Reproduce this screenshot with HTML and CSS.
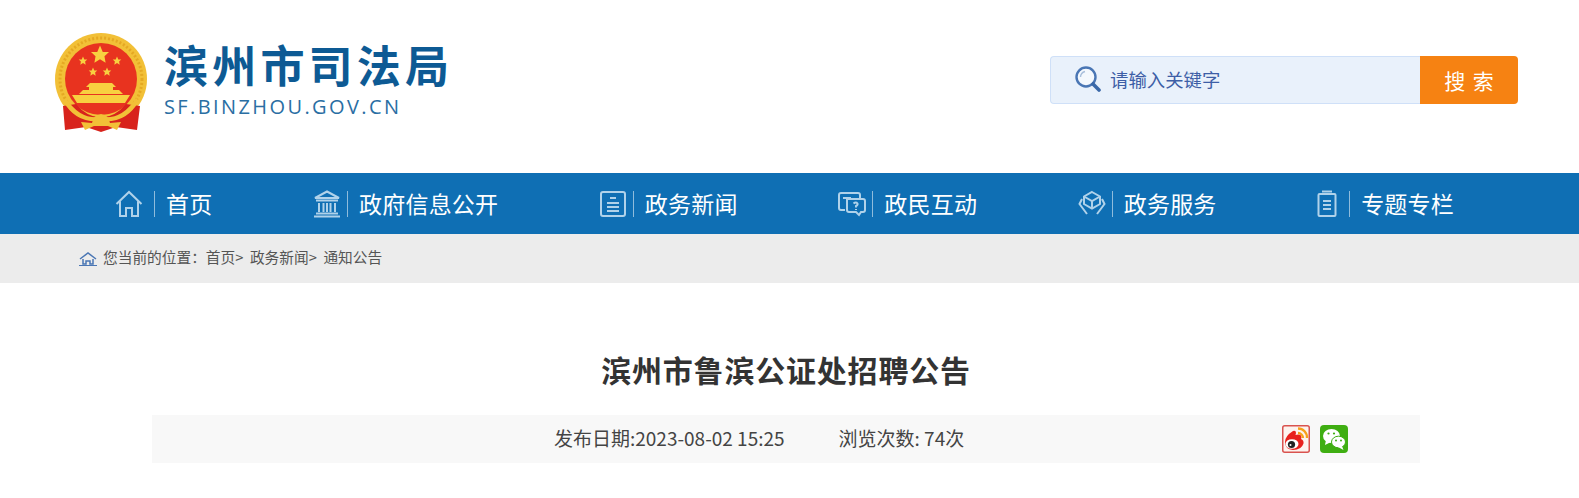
FILE: index.html
```html
<!DOCTYPE html>
<html lang="zh-CN">
<head>
    <meta charset="UTF-8">
    <title>滨州市鲁滨公证处招聘公告</title>
    <link rel="stylesheet" href="styles.css">
</head>
<body>
    <header class="top">
        <div class="logo">
            <svg class="emblem" viewBox="0 0 96 102">
                <defs>
                    <polygon id="star" points="0,-10 2.9,-3.1 9.5,-3.1 4.7,1.2 5.9,8.1 0,4.4 -5.9,8.1 -4.7,1.2 -9.5,-3.1 -2.9,-3.1"/>
                </defs>
                <circle cx="47" cy="47" r="46" fill="#f2c037"/>
                <circle cx="47" cy="47" r="41" fill="none" stroke="#e5a823" stroke-width="3" stroke-dasharray="2 2"/>
                <circle cx="47" cy="47" r="36" fill="#e8331f"/>
                <g fill="#f8d040">
                    <use href="#star" transform="translate(46 23) scale(.95)"/>
                    <use href="#star" transform="translate(29 29) scale(.45)"/>
                    <use href="#star" transform="translate(63 29) scale(.45)"/>
                    <use href="#star" transform="translate(39 40) scale(.45)"/>
                    <use href="#star" transform="translate(53 40) scale(.45)"/>
                    <path d="M36 51 H58 L62 55 H32 Z"/>
                    <path d="M35 55 H59 V58 H35 Z"/>
                    <path d="M29 58 H65 L69 62 H25 Z"/>
                    <path d="M18 63 H76 L71 71 H23 Z"/>
                </g>
                <path d="M9 74 L22 72 Q34 86 47 85 Q60 86 72 72 L86 74 L83 98 L62 95 L47 100 L32 95 L11 98 Z" fill="#d8231c"/>
                <path d="M12 66 Q26 88 47 85 Q68 88 82 66 L85 69 Q72 92 47 89 Q22 92 9 69 Z" fill="#f2c037"/>
                <path d="M27 90 L38 91 Q39 83 47 82 Q55 83 56 91 L67 90 L63 98 L54 94 H40 L31 98 Z" fill="#f2c037"/>
            </svg>
            <div class="logo-text">
                <div class="logo-name">滨州市司法局</div>
                <div class="logo-url">SF.BINZHOU.GOV.CN</div>
            </div>
        </div>
        <form class="search">
            <div class="search-box">
                <svg class="search-icon" viewBox="0 0 26 26">
                    <circle cx="11" cy="11" r="9.5" fill="#fff" fill-opacity=".5" stroke="#4a76b4" stroke-width="2.4"/>
                    <path d="M5.5 11 A6 6 0 0 1 10 5.5" fill="none" stroke="#a9bfdc" stroke-width="1.4"/>
                    <path d="M18 18 L24 24" stroke="#3a68a8" stroke-width="3.6" stroke-linecap="round"/>
                </svg>
                <span class="placeholder">请输入关键字</span>
            </div>
            <button type="button" class="search-btn">搜 索</button>
        </form>
    </header>

    <nav class="nav">
        <a class="nav-item">
            <svg class="nav-icon icon-home" viewBox="0 0 28 28">
                <path d="M1.5 14 L14 2 L26.500 14 M5 11.500 V26 H11 V18 H17 V26 H23 V11.500"/>
            </svg>
            <span class="nav-text">首页</span>
        </a>
        <a class="nav-item">
            <svg class="nav-icon" viewBox="0 0 28 28">
                <path d="M14 1.500 L26 8 H2 Z M3 10.500 H25 M6 13 V22 M10.500 13 V22 M14 13 V22 M17.500 13 V22 M22 13 V22 M3 23.500 H25 M1 26.500 H27"/>
            </svg>
            <span class="nav-text">政府信息公开</span>
        </a>
        <a class="nav-item">
            <svg class="nav-icon" viewBox="0 0 28 28">
                <rect x="2" y="2" width="24" height="24" rx="2"/>
                <path d="M11 8 H17 M8 13 H20 M8 17 H20 M8 21 H20"/>
            </svg>
            <span class="nav-text">政务新闻</span>
        </a>
        <a class="nav-item">
            <svg class="nav-icon" viewBox="0 0 28 28">
                <path d="M7 20 H3 Q1 20 1 18 V5 Q1 3 3 3 H20 Q22 3 22 5 V8 M5 8 H13"/>
                <path d="M9 9 H25 Q27 9 27 11 V20 Q27 22 25 22 H23 L21 25 L18 22 H11 Q9 22 9 20 Z"/>
                <path d="M15.500 13.500 Q18 11.500 19.500 13.500 Q20 15 18 16 V17.500 M18 19 V20"/>
            </svg>
            <span class="nav-text">政民互动</span>
        </a>
        <a class="nav-item">
            <svg class="nav-icon" viewBox="0 0 28 28">
                <path d="M14 2 L22 6.500 V14 L14 18.500 L6 14 V6.500 Z M6 6.500 L14 11 L22 6.500 M14 11 V18.500"/>
                <path d="M4 9 L1.500 14 L9 24 M24 9 L26.500 14 L19 24"/>
            </svg>
            <span class="nav-text">政务服务</span>
        </a>
        <a class="nav-item">
            <svg class="nav-icon icon-zt" viewBox="0 0 20 28">
                <rect x="1.500" y="4" width="17" height="22" rx="1"/>
                <path d="M5 1.500 H15 M6 11 H14 M6 15 H14 M6 19 H14"/>
            </svg>
            <span class="nav-text">专题专栏</span>
        </a>
    </nav>

    <div class="crumbs">
        <svg class="crumbs-icon" viewBox="0 0 18 14">
            <path d="M1 7 L9 1 L17 7" fill="none" stroke="#4a76b4" stroke-width="1.500"/>
            <path d="M4 7 V12 H7 V9 H11 V12 H14 V7" fill="none" stroke="#4a76b4" stroke-width="1.500"/>
            <path d="M0 13.500 H18" stroke="#4a76b4"/>
        </svg>
        <span>您当前的位置：首页&gt; &nbsp;政务新闻&gt; &nbsp;通知公告</span>
    </div>

    <main class="article">
        <h1 class="article-title">滨州市鲁滨公证处招聘公告</h1>
        <div class="meta">
            <span class="meta-date">发布日期:2023-08-02 15:25</span>
            <span class="meta-views">浏览次数: 74次</span>
            <div class="share">
                <svg class="share-icon" viewBox="0 0 28 28">
                    <rect x=".75" y=".75" width="26.500" height="26.500" rx="2" fill="#fdf3ee" stroke="#d9534f" stroke-width="1.500"/>
                    <path d="M3 17 Q3 11 11 6 Q14 5 14 8 L13.500 10 Q19 8.500 19.500 12 Q19.500 13 19 14 Q22 15 21.500 18.500 Q19.500 25 11 25 Q3 24.500 3 17 Z" fill="#e8211d"/>
                    <ellipse cx="10" cy="19" rx="6.500" ry="4.800" fill="#fff"/>
                    <circle cx="9.500" cy="19.500" r="3.600" fill="#222"/>
                    <circle cx="8.500" cy="20" r="1" fill="#fff"/>
                    <path d="M16 3.500 A9 9 0 0 1 25 13 M16 8 A5 5 0 0 1 21 13" fill="none" stroke="#f7a11a" stroke-width="2.300"/>
                </svg>
                <svg class="share-icon" viewBox="0 0 28 28">
                    <rect width="28" height="28" rx="4" fill="#3fae12"/>
                    <ellipse cx="11.500" cy="11" rx="8.500" ry="7" fill="#fff"/>
                    <path d="M6 15 L5 20 L11 17 Z" fill="#fff"/>
                    <ellipse cx="18.500" cy="17" rx="7" ry="5.800" fill="#fff" stroke="#3fae12"/>
                    <path d="M22 21 L23.500 25 L18 22 Z" fill="#fff"/>
                    <circle cx="8.500" cy="8.500" r="1.100" fill="#3fae12"/>
                    <circle cx="14" cy="8.500" r="1.100" fill="#3fae12"/>
                    <circle cx="16" cy="15.500" r="1" fill="#3fae12"/>
                    <circle cx="21" cy="15.500" r="1" fill="#3fae12"/>
                </svg>
            </div>
        </div>
    </main>
</body>
</html>
```

FILE: styles.css
```css
* {
    box-sizing: border-box;
    margin: 0;
    padding: 0;
}

body {
    font-family: "Noto Sans CJK SC", "Noto Sans", sans-serif;
    color: #333;
    background: #fff;
}

.top {
    display: flex;
    justify-content: space-between;
    height: 173px;
    padding: 32px 61px 0 54px;
}

.logo {
    display: flex;
    align-items: flex-start;
}

.emblem {
    width: 96px;
    height: 102px;
}

.logo-text {
    margin-left: 14px;
    color: #0d5a94;
}

.logo-name {
    margin-top: 5px;
    font-size: 44px;
    font-weight: 700;
    line-height: 54px;
    letter-spacing: 4.2px;
}

.logo-url {
    margin-top: 4px;
    font-family: "Open Sans", sans-serif;
    font-size: 20px;
    line-height: 24px;
    letter-spacing: 2.4px;
    color: #2a6ea3;
}

.search {
    display: flex;
    width: 468px;
    height: 48px;
    margin-top: 24px;
}

.search-box {
    display: flex;
    flex: 1;
    align-items: center;
    padding: 0 0 2px 24px;
    background: #e9f1fb;
    border: 1px solid #cfe0f8;
    border-right: 0;
    border-radius: 4px 0 0 4px;
}

.search-icon {
    width: 26px;
    height: 26px;
}

.placeholder {
    margin-left: 9px;
    font-size: 18.4px;
    color: #3d5ea6;
}

.search-btn {
    width: 98px;
    font-family: inherit;
    font-size: 21px;
    color: #fff;
    word-spacing: 3px;
    background: #f68212;
    border: 0;
    border-radius: 0 4px 4px 0;
}

.nav {
    display: flex;
    justify-content: space-between;
    height: 61px;
    padding: 0 125px 0 115px;
    background: #0f6fb4;
}

.nav-item {
    display: flex;
    align-items: center;
    color: #fff;
}

.nav-icon {
    width: 28px;
    height: 28px;
    margin-right: 6px;
    fill: none;
    stroke: #b0d2ea;
    stroke-width: 2;
}

.icon-home {
    margin-right: 11px;
}

.icon-zt {
    width: 20px;
    margin-right: 12px;
}

.nav-text {
    padding: 0 0 2px 11px;
    font-size: 23px;
    line-height: 24px;
    letter-spacing: .2px;
    border-left: 1px solid #8fbcdc;
}

.crumbs {
    display: flex;
    align-items: center;
    height: 49px;
    padding: 0 0 4px 79px;
    font-size: 14.7px;
    color: #555;
    background: #ececec;
}

.crumbs-icon {
    width: 18px;
    height: 14px;
    margin: 4px 6px 0 0;
}

.article {
    width: 1268px;
    margin-left: 152px;
}

.article-title {
    margin: 61px 0 21px;
    font-size: 30px;
    font-weight: 700;
    line-height: 50px;
    letter-spacing: .8px;
    text-align: center;
    color: #333;
}

.meta {
    display: flex;
    align-items: center;
    height: 48px;
    padding: 0 72px 3px 402px;
    font-size: 19px;
    color: #444;
    background: #f8f8f8;
}

.meta-views {
    margin-left: 54px;
}

.share {
    display: flex;
    gap: 10px;
    margin: 3px 0 0 auto;
}

.share-icon {
    width: 28px;
    height: 28px;
}
```
